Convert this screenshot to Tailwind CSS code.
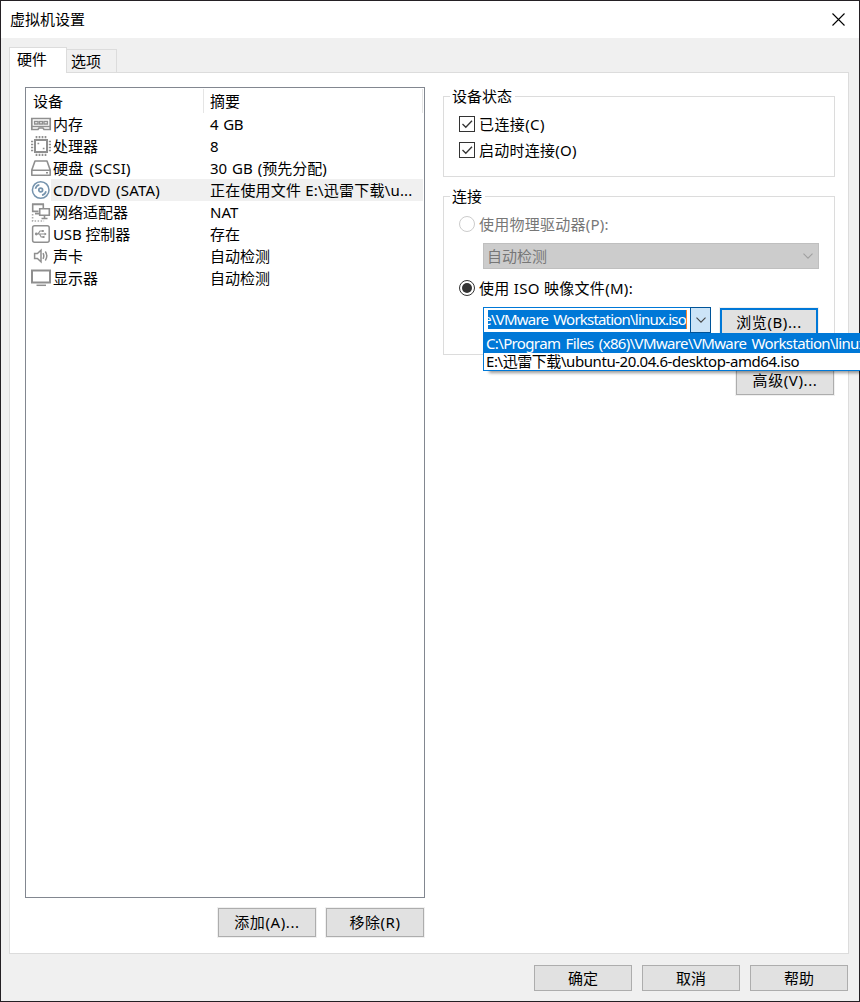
<!DOCTYPE html>
<html lang="zh-CN">
<head>
<meta charset="utf-8">
<title>虚拟机设置</title>
<script src="https://cdn.jsdelivr.net/npm/@tailwindcss/browser@4"></script>
</head>
<body class="w-[860px] h-[1002px] overflow-hidden font-['Noto_Sans','Noto_Sans_CJK_SC',sans-serif] text-[15px] leading-[22px] text-black whitespace-nowrap">
<div class="relative w-[860px] h-[1002px] border border-[#242024] bg-[#f0f0f0] flex flex-col overflow-hidden">
  <header class="h-[37px] shrink-0 bg-white flex items-center justify-between pl-[9px] pr-[14px]">
    <h1 class="pb-[2px]">虚拟机设置</h1>
    <svg class="w-[13px] h-[13px]" viewBox="0 0 13 13" fill="none" stroke="#000" stroke-width="1.1"><path d="M.5 .5l12 12M12.5 .5l-12 12"/></svg>
  </header>

  <nav class="h-[25px] mt-[9px] pl-2 flex items-start shrink-0 relative z-10">
    <div class="w-[58px] h-[26px] bg-white border border-b-0 border-[#dcdcdc] pl-[7px]">硬件</div>
    <div class="w-[50px] h-[23px] mt-[2px] border border-l-0 border-b-0 border-[#dcdcdc] pl-1">选项</div>
  </nav>

  <main class="ml-2 w-[840px] h-[882px] shrink-0 bg-white border border-[#dcdcdc] pl-[15px] pt-[14px] flex">
    <section class="w-[400px]">
      <div class="h-[811px] border border-[#828790] pt-px">
        <div class="h-6 flex leading-6">
          <div class="w-[178px] pl-[7px] border-r border-[#e5e5e5]">设备</div>
          <div class="w-[219px] pl-[6px] border-r border-[#e5e5e5]">摘要</div>
        </div>
        <ul class="pl-1">
          <li class="flex h-[22px]">
            <svg class="w-[22px] h-[22px] shrink-0" viewBox="0 0 22 22" fill="none" stroke="#8f8f8f"><path stroke-width="1.700" d="M1.800 5.500h18.400v11h-6.200l-1-1.500h-4l-1 1.500h-6.200z"/><path stroke-width="1.300" d="M2 13.500h18M4.500 8.500h3.500v2.500h-3.500zM9.500 8.500h3v2.500h-3zM14 8.500h3.500v2.500h-3.500z"/></svg>
            <div class="w-[157px] pl-px">内存</div><div class="pl-[1px] tracking-[-0.4px] [word-spacing:1.5px]">4 GB</div>
          </li>
          <li class="flex h-[22px]">
            <svg class="w-[22px] h-[22px] shrink-0" viewBox="0 0 22 22" fill="none" stroke="#8f8f8f" stroke-width="2"><path d="M5 5h12v12H5z"/><path stroke-width="1.700" d="M6.500 1v2.200M9.500 1v2.200M12.500 1v2.200M15.500 1v2.200M6.500 18.800v2.200M9.500 18.800v2.200M12.500 18.800v2.200M15.500 18.800v2.200M1 6.500h2.200M1 9.500h2.200M1 12.500h2.200M1 15.500h2.200M18.800 6.500h2.200M18.800 9.500h2.200M18.800 12.500h2.200M18.800 15.500h2.200"/><path stroke-width="1.700" d="M7.500 8.500h1.700M12.800 13.500h1.700"/></svg>
            <div class="w-[157px] pl-px">处理器</div><div class="pl-[1px]">8</div>
          </li>
          <li class="flex h-[22px]">
            <svg class="w-[22px] h-[22px] shrink-0" viewBox="0 0 22 22" fill="none" stroke="#8f8f8f" stroke-width="1.600" stroke-linejoin="round"><path d="M5 4h12l3.200 9v5.200H1.800V13zM2 13.300h18.300"/><path d="M16 15.800h2"/></svg>
            <div class="w-[157px] pl-px [word-spacing:2px] tracking-[0.2px]">硬盘 (SCSI)</div><div class="pl-[1px] [word-spacing:1px]">30 GB (预先分配)</div>
          </li>
          <li class="flex h-[22px]">
            <svg class="w-[21px] h-[22px] shrink-0" viewBox="0 0 21 22" fill="none" stroke="#7593ad" stroke-width="1.500"><circle cx="10.700" cy="11" r="8.300"/><circle cx="10.700" cy="11" r="1.900" stroke-width="1.700"/><path stroke-width="1.600" d="M5.400 9.800a5.400 5.400 0 0 1 4-4M16 12.200a5.400 5.400 0 0 1-4 4"/></svg>
            <div class="w-[372px] flex bg-[#f0f0f0]"><div class="w-[158px] pl-[2px] [word-spacing:1px] tracking-[0.2px]">CD/DVD (SATA)</div><div class="pl-[1px] tracking-[0.2px]">正在使用文件 E:\迅雷下载\u...</div></div>
          </li>
          <li class="flex h-[22px]">
            <svg class="w-[22px] h-[22px] shrink-0" viewBox="0 0 22 22" fill="none" stroke="#8f8f8f" stroke-width="1.600"><path d="M8.500 10.400H2.700V3.500h10.600V7M2 3h12M5 12.600h4"/><path d="M9.700 7.700h9.600v6.600H9.700zM14.500 15v2M11.500 17.500h6"/><path stroke-dasharray="1.500 1.500" stroke="#aaa" d="M2.600 13v7h11.500"/></svg>
            <div class="w-[157px] pl-px">网络适配器</div><div class="pl-[1px]">NAT</div>
          </li>
          <li class="flex h-[22px]">
            <svg class="w-[22px] h-[22px] shrink-0" viewBox="0 0 22 22" fill="none" stroke="#909090" stroke-width="1.500"><rect x="2.600" y="2.700" width="16.600" height="16.600" rx="2"/><path stroke-width="1.200" d="M6 11h10M8 11l2-3h2M9.500 11l1.700 3h2"/><circle cx="6.300" cy="11" r="1.400" fill="#909090" stroke="none"/><path fill="#909090" stroke="none" d="M14.500 9.500l2.200 1.500-2.200 1.500zM11.800 7h2v2h-2zM12.500 13h2v2h-2z"/></svg>
            <div class="w-[157px] pl-px tracking-[-0.1px]">USB 控制器</div><div class="pl-[1px]">存在</div>
          </li>
          <li class="flex h-[22px]">
            <svg class="w-[22px] h-[22px] shrink-0" viewBox="0 0 22 22" fill="none" stroke="#8f8f8f" stroke-width="1.500"><path d="M4.600 8.600h2.800l3.600-3.400v11.600l-3.600-3.400H4.600z"/><path d="M13 8.200q1.600 2.800 0 5.600M15.300 6.500q3 4.500 0 9"/></svg>
            <div class="w-[157px] pl-px">声卡</div><div class="pl-[1px]">自动检测</div>
          </li>
          <li class="flex h-[22px]">
            <svg class="w-[22px] h-[22px] shrink-0" viewBox="0 0 22 22" fill="none" stroke="#8f8f8f" stroke-width="2"><path d="M2 3.500h18v12H2z"/><path d="M6.500 18.300h9.500" stroke-width="1.500"/></svg>
            <div class="w-[157px] pl-px">显示器</div><div class="pl-[1px]">自动检测</div>
          </li>
        </ul>
      </div>
      <div class="flex justify-end gap-[10px] mt-[10px] pr-px">
        <button class="w-[98px] h-[29px] pb-px border border-[#adadad] bg-[#e1e1e1] outline outline-[#f0f0f0] tracking-[0.6px]">添加(A)...</button>
        <button class="w-[98px] h-[29px] pb-px border border-[#adadad] bg-[#e1e1e1] outline outline-[#f0f0f0] tracking-[0.5px]">移除(R)</button>
      </div>
    </section>

    <section class="ml-[18px] w-[392px] pt-[9px] flex flex-col">
      <div class="h-[81px] border border-[#dcdcdc]">
        <div class="-mt-[12px] ml-[6px] pl-[2px] pr-[3px] w-fit bg-white">设备状态</div>
        <label class="flex items-center gap-1 pl-[15px] mt-[6px] tracking-[0.4px]">
          <span class="w-4 h-4 border border-[#333] bg-white"><svg class="w-[14px] h-[14px] block" viewBox="0 0 14 14" fill="none" stroke="#333" stroke-width="1.3"><path d="M2.500 7l3.300 3.300L12 3.800"/></svg></span>已连接(C)
        </label>
        <label class="flex items-center gap-1 pl-[15px] mt-1 tracking-[0.25px]">
          <span class="w-4 h-4 border border-[#333] bg-white"><svg class="w-[14px] h-[14px] block" viewBox="0 0 14 14" fill="none" stroke="#333" stroke-width="1.3"><path d="M2.500 7l3.300 3.300L12 3.800"/></svg></span>启动时连接(O)
        </label>
      </div>

      <div class="h-[159px] mt-[19px] border border-[#dcdcdc]">
        <div class="-mt-[12px] ml-[6px] pl-[2px] pr-[3px] w-fit bg-white">连接</div>
        <label class="flex items-center gap-1 pl-[15px] mt-[6px] text-[#777] tracking-[0.25px]">
          <span class="w-4 h-4 rounded-full border border-[#ccc] bg-white"></span>使用物理驱动器(P):
        </label>
        <div class="ml-[39px] mt-2 w-[336px] h-[26px] bg-[#ccc] border border-[#bfbfbf] text-[#777] flex items-center justify-between pl-[3px] pr-[5px]">自动检测<svg class="w-[10px] h-[6px]" viewBox="0 0 10 6" fill="none" stroke="#a0a0a0" stroke-width="1.1"><path d="M.5 .7l4.500 4.500L9.500 .7"/></svg></div>
        <label class="flex items-center gap-1 pl-[15px] mt-2 tracking-[0.3px]">
          <span class="w-4 h-4 rounded-full border border-[#333] bg-white flex items-center justify-center"><span class="w-[10px] h-[10px] rounded-full bg-[#333]"></span></span>使用 ISO 映像文件(M):
        </label>
        <div class="ml-[39px] mt-2 flex">
          <div class="w-[228px] h-[26px] border border-[#0078d7] bg-white flex">
            <div class="ml-1 mt-[2px] w-[199px] h-[19px] leading-[19px] bg-[#0078d7] text-white overflow-hidden flex justify-end border-r border-[#ff8728] tracking-[-0.8px] [word-spacing:2px]">e\VMware Workstation\linux.iso</div>
            <div class="ml-[3px] -mt-px -mr-px w-[21px] h-[26px] shrink-0 border border-[#005499] bg-[#cce4f7] flex items-center justify-center"><svg class="w-[10px] h-[6px]" viewBox="0 0 10 6" fill="none" stroke="#444" stroke-width="1.1"><path d="M.5 .7l4.500 4.500L9.500 .7"/></svg></div>
          </div>
          <button class="ml-[9px] mt-px w-[98px] h-[28px] pb-px border-2 border-[#0078d7] bg-[#e1e1e1] outline outline-[#f0f0f0] tracking-[0.6px]">浏览(B)...</button>
        </div>
      </div>
      <button class="self-end mr-px mt-3 w-[98px] h-[28px] pb-[2px] border border-[#adadad] bg-[#e1e1e1] outline outline-[#f0f0f0] tracking-[0.6px]">高级(V)...</button>
    </section>
  </main>

  <footer class="flex gap-[10px] justify-end pr-[11px] mt-[11px]">
    <button class="w-[98px] h-[26px] border border-[#adadad] bg-[#e1e1e1]">确定</button>
    <button class="w-[98px] h-[26px] border border-[#adadad] bg-[#e1e1e1]">取消</button>
    <button class="w-[98px] h-[26px] border border-[#adadad] bg-[#e1e1e1]">帮助</button>
  </footer>
</div>

<div class="absolute z-20 left-[483px] top-[333px] w-[377px] h-[38px] overflow-hidden border border-r-0 border-[#0078d7] bg-white leading-[18px] shadow-[5px_3px_3px_-1px_rgba(0,0,0,0.4)]">
  <div class="h-[19px] pl-[2px] bg-[#0078d7] text-white tracking-[-0.64px] [word-spacing:2px]">C:\Program Files (x86)\VMware\VMware Workstation\linux.iso</div>
  <div class="h-[17px] pl-[2px] leading-[17px] tracking-[-0.43px]">E:\迅雷下载\ubuntu-20.04.6-desktop-amd64.iso</div>
</div>
</body>
</html>
